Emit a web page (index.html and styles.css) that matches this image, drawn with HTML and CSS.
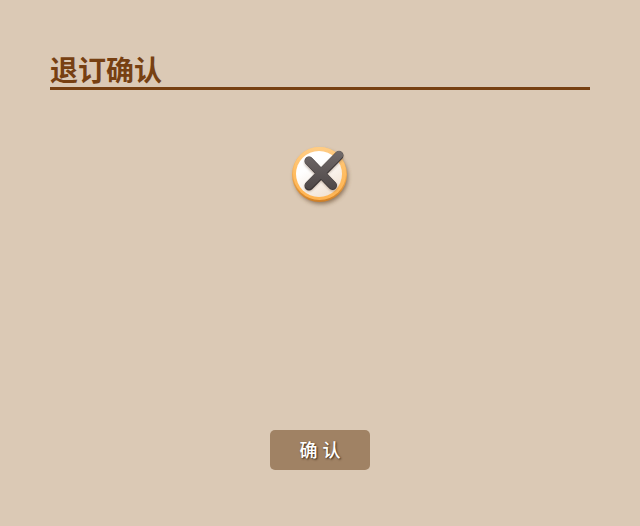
FILE: index.html
```html
<!DOCTYPE html>
<html lang="zh-CN">
<head>
<meta charset="utf-8">
<meta name="viewport" content="width=device-width, initial-scale=1">
<title>退订确认</title>
<link rel="stylesheet" href="styles.css">
</head>
<body>
<main class="page">
  <h1 class="title">退订确认</h1>
  <div class="status">
    <svg class="status-icon" width="80" height="80" viewBox="0 0 80 80" aria-hidden="true">
      <defs>
        <linearGradient id="ring" x1="0" y1="0" x2="0" y2="1">
          <stop offset="0" stop-color="#ffcd86"/>
          <stop offset="0.5" stop-color="#ffbd62"/>
          <stop offset="1" stop-color="#ffb452"/>
        </linearGradient>
        <linearGradient id="edge" x1="0" y1="0" x2="0" y2="1">
          <stop offset="0" stop-color="#ffc878"/>
          <stop offset="0.5" stop-color="#f5ad50"/>
          <stop offset="1" stop-color="#d07f25"/>
        </linearGradient>
        <linearGradient id="face" x1="0" y1="0" x2="0.6" y2="1">
          <stop offset="0.4" stop-color="#ffffff"/>
          <stop offset="1" stop-color="#f2e4d6"/>
        </linearGradient>
        <linearGradient id="cross" gradientUnits="userSpaceOnUse" x1="40" y1="16" x2="40" y2="56">
          <stop offset="0" stop-color="#716a6a"/>
          <stop offset="1" stop-color="#4c4646"/>
        </linearGradient>
        <filter id="soft" x="-30%" y="-30%" width="160%" height="160%">
          <feGaussianBlur stdDeviation="2"/>
        </filter>
        <filter id="near" x="-30%" y="-30%" width="160%" height="160%">
          <feGaussianBlur stdDeviation="1"/>
        </filter>
      </defs>
      <circle cx="41" cy="42" r="27" fill="#65472a" opacity="0.65" filter="url(#soft)"/>
      <circle cx="39.5" cy="39.5" r="27.5" fill="url(#edge)"/>
      <circle cx="39.5" cy="38.5" r="26.5" fill="url(#ring)"/>
      <circle cx="39" cy="39" r="23" fill="url(#face)"/>
      <g fill="none" stroke-linecap="round" stroke-width="9">
        <path d="M29 28L53 52M29 52L59 22" stroke="#7b604c" opacity="0.4" filter="url(#near)"/>
        <path d="M29 26L52.500 50.500M29 51L59 20.500" stroke="#3d3737"/>
        <path d="M29 26L52.500 50M29 50L59 20" stroke="url(#cross)" stroke-width="8"/>
      </g>
    </svg>
  </div>
  <button class="confirm" type="button">确 认</button>
</main>
</body>
</html>
```
FILE: styles.css
```css
* {
  box-sizing: border-box;
}

body {
  margin: 0;
  background: #dbc9b5;
  font-family: "Noto Sans CJK SC", sans-serif;
}

.page {
  display: flex;
  flex-direction: column;
  min-height: 100vh;
  padding: 52px 50px 56px;
}

.title {
  margin: 0;
  border-bottom: 3px solid #774012;
  color: #774012;
  font-size: 28px;
  font-weight: 700;
  line-height: 35px;
}

.status {
  flex: 1;
  display: flex;
  justify-content: center;
  align-items: flex-start;
  padding-top: 45px;
}

.status-icon {
  display: block;
}

.confirm {
  align-self: center;
  width: 100px;
  height: 40px;
  padding: 0 0 2px;
  border: 0;
  border-radius: 5px;
  background: #a08264;
  color: #fff;
  font-family: "Liberation Sans", "Noto Sans CJK SC", sans-serif;
  font-size: 18px;
  font-weight: 500;
  text-shadow: 1px 1px 2px #3c2814;
  cursor: pointer;
}
```
